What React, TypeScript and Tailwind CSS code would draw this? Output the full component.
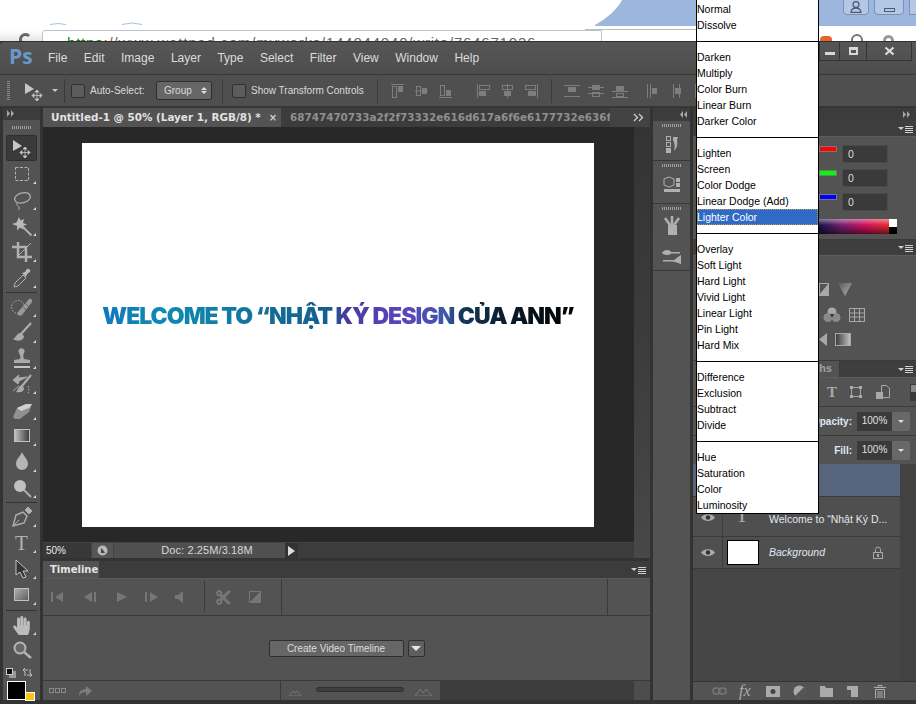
import type { ReactNode } from 'react';
import { FaHandPaper, FaCut } from 'react-icons/fa';

const G = '#b0b0b0';

function Svg({ w = 22, h = 22, children, className = '' }: { w?: number; h?: number; children: ReactNode; className?: string }) {
  return (
    <svg width={w} height={h} viewBox={`0 0 ${w} ${h}`} className={`shrink-0 ${className}`}>
      {children}
    </svg>
  );
}

const shade = (
  <defs>
    <linearGradient id="toolGrad" x1="0" x2="1" y1="0" y2="1">
      <stop offset="0" stopColor="#5c5c5c" />
      <stop offset="1" stopColor="#b0b0b0" />
    </linearGradient>
    <linearGradient id="sideGrad" x1="0" x2="1" y1="0" y2="0">
      <stop offset="0" stopColor="#3a3a3a" />
      <stop offset="1" stopColor="#c4c4c4" />
    </linearGradient>
  </defs>
);

const toolIcons: Record<string, ReactNode> = {
  move: (
    <Svg w={24} h={20}>
      <path d="M3 2v11l9-5z" fill="#c6c6c6" />
      <path d="M15 10v9M10.500 14.500h9M15 9l-2 2h4zM15 20l-2-2h4zM10 14.500l2-2v4zM20 14.500l-2-2v4z" stroke="#c6c6c6" strokeWidth=".8" fill="#c6c6c6" />
    </Svg>
  ),
  marquee: <Svg><rect x="4.500" y="4.500" width="13" height="13" fill="none" stroke={G} strokeDasharray="3 1.500" /></Svg>,
  lasso: (
    <Svg>
      <ellipse cx="11.500" cy="9" rx="8" ry="5" transform="rotate(-15 11 9)" fill="none" stroke={G} strokeWidth="1.300" />
      <path d="M6 14c-1 2 1 3 2 4s0 3-1 3" fill="none" stroke={G} />
    </Svg>
  ),
  wand: (
    <Svg>
      <path d="M8 2l1.500 3.500L13 4l-1 4 4 1.500-4 1.500.5 3.500-3.500-2-3 3 .2-4.500L1 9l4.500-1.500z" fill="#bbb" />
      <path d="M11 11l9.500 9.500" stroke={G} strokeWidth="2" />
    </Svg>
  ),
  crop: (
    <Svg>
      <path d="M7 1v15h14M1 6h14v15" fill="none" stroke={G} strokeWidth="2.500" />
      <path d="M8 14L20 2" stroke={G} />
    </Svg>
  ),
  dropper: (
    <Svg>
      <path d="M3 20l1-4 8-8 3 3-8 8z" fill="none" stroke={G} />
      <path d="M11 6l3-1 2-3c2-1 4 1 3 3l-3 2-1 3z" fill="#bbb" />
    </Svg>
  ),
  heal: (
    <Svg w={24}>
      <circle cx="8" cy="11" r="6.500" fill="none" stroke={G} strokeDasharray="1.500 1.500" />
      <path d="M8 16L19 3c2-1 4 1 3 3L12 19c-3 2-6-1-4-3z" fill="#999" />
      <path d="M12 10l4 4M15 7l4 4" stroke="#666" />
    </Svg>
  ),
  brush: (
    <Svg>
      <path d="M20 1L10 12" stroke={G} strokeWidth="2" />
      <path d="M10 11c-4-1-5 5-8 6 4 3 11 2 11-3z" fill="#aaa" />
    </Svg>
  ),
  stamp: (
    <Svg>
      <path d="M8 5a3 3 0 1 1 5 0c-1 2-1 4 0 6l6 1v3H3v-3l6-1c1-2 0-4-1-6z" fill="#aaa" />
      <path d="M3 18h16v2H3z" fill="#c4c4c4" />
    </Svg>
  ),
  history: (
    <Svg>
      <path d="M20 1L11 12" stroke={G} strokeWidth="2" />
      <path d="M11 11c-3 0-4 5-6 7 4 1 8 0 8-4z" fill="#aaa" />
      <path d="M2 6l5 4 1-3 8-4-9 1 1-3zM2 17l6-5" fill="#aaa" stroke="#aaa" />
      <path d="M17 12c1 3 1 5 0 8" stroke={G} strokeDasharray="1.500 1.500" fill="none" />
    </Svg>
  ),
  eraser: (
    <Svg w={24}>
      <path d="M3 18l4-9 9-4h6l-3 8-9 7H5z" fill="#909090" />
      <path d="M7 9l9-4h6l-3 4-8 3z" fill="#d0d0d0" />
    </Svg>
  ),
  gradient: <Svg><rect x="3.500" y="4.500" width="15" height="12" fill="url(#sideGrad)" stroke="#c0c0c0" transform="matrix(-1 0 0 1 22 0)" /></Svg>,
  drop: <Svg><path d="M11 1C9 6 5 8 5 13a6 6 0 0 0 12 0C17 8 13 6 11 1z" fill="#b5b5b5" /></Svg>,
  dodge: (
    <Svg>
      <circle cx="9" cy="9" r="6" fill="#c0c0c0" />
      <path d="M13 13l7 7" stroke={G} strokeWidth="2" />
    </Svg>
  ),
  pen: (
    <Svg w={24}>
      <path d="M3 20l3-11 7-3 4 4-3 7z" fill="none" stroke={G} strokeWidth="1.400" />
      <path d="M3 20l6-6M15 4l3-3 4 4-3 3z" stroke={G} fill={G} />
    </Svg>
  ),
  pathSel: <Svg><path d="M5 2v15l4-3 3 6 3-1-3-6h5z" fill="#333" stroke="#c4c4c4" /></Svg>,
  rect: <Svg><rect x="3.500" y="4.500" width="14" height="12" fill="url(#toolGrad)" stroke="#c0c0c0" transform="matrix(-1 0 0 -1 21 21)" /></Svg>,
  hand: <FaHandPaper size={19} color="#bcbcbc" />,
  zoom: (
    <Svg>
      <circle cx="9" cy="8" r="5.500" fill="#666" stroke="#b5b5b5" strokeWidth="2" />
      <path d="M13 12l7 6" stroke={G} strokeWidth="2.500" />
    </Svg>
  ),
};

function Tool({ name, selected = false, corner = true }: { name: string; selected?: boolean; corner?: boolean }) {
  return (
    <div className={`relative mx-[3px] h-[26px] flex items-center justify-center rounded-[2px] ${selected ? 'bg-[#3a3a3a] border border-[#2e2e2e]' : ''}`}>
      {name === 'type' ? (
        <span className="font-['Liberation_Serif',serif] text-[21px] leading-none text-[#b0b0b0]">T</span>
      ) : (
        toolIcons[name]
      )}
      {corner && <span className="absolute right-[1px] bottom-[3px] w-0 h-0 border-l-[3px] border-l-transparent border-b-[3px] border-b-[#d8d8d8]" />}
    </div>
  );
}

const ToolSep = ({ h }: { h: string }) => (
  <div className={`${h} flex items-center px-[3px]`}>
    <div className="w-full h-px bg-[#343434]" />
  </div>
);

function Grip({ w }: { w: string }) {
  return <div className={`${w} h-[3px] bg-[repeating-linear-gradient(90deg,#a0a0a0_0,#a0a0a0_1px,transparent_1px,transparent_2px)]`} />;
}

function Chevrons({ left = false }: { left?: boolean }) {
  return (
    <Svg w={8} h={7} className={left ? 'rotate-180' : ''}>
      <path d="M0 0l3 3.500L0 7zM4 0l3 3.500L4 7z" fill="#a8a8a8" />
    </Svg>
  );
}

function Toolbar() {
  return (
    <div className="w-[38px] ml-[3px] bg-[#535353] flex flex-col shrink-0 border-r border-[#333]">
      <div className="h-[12px] bg-[#3c3c3c] flex items-center pl-[4px]"><Chevrons /></div>
      <div className="h-[15px] flex items-center justify-center"><Grip w="w-[20px]" /></div>
      <Tool name="move" selected corner={false} />
      <Tool name="marquee" />
      <Tool name="lasso" />
      <Tool name="wand" />
      <Tool name="crop" />
      <Tool name="dropper" />
      <ToolSep h="h-[3px]" />
      <Tool name="heal" />
      <Tool name="brush" />
      <Tool name="stamp" />
      <Tool name="history" />
      <Tool name="eraser" />
      <Tool name="gradient" />
      <Tool name="drop" />
      <Tool name="dodge" />
      <ToolSep h="h-[3px]" />
      <Tool name="pen" />
      <Tool name="type" />
      <Tool name="pathSel" />
      <Tool name="rect" />
      <ToolSep h="h-[4px]" />
      <Tool name="hand" />
      <Tool name="zoom" corner={false} />
      <div className="h-[17px] flex items-center justify-between pl-[3px] pr-[7px]">
        <Svg w={10} h={10}>
          <rect x="3" y="3" width="7" height="7" fill="#999" />
          <rect x=".5" y=".5" width="6" height="6" fill="#111" stroke="#ccc" />
        </Svg>
        <Svg w={11} h={11}>
          <path d="M1 3h5M1 3l2-2M1 3l2 2M10 8H5M10 8L8 6M10 8l-2 2M8 2v4M3 5v4" stroke="#c0c0c0" fill="none" />
        </Svg>
      </div>
      <div className="relative h-[19px] ml-[4px]">
        <div className="w-[19px] h-[19px] bg-black border border-white" />
        <div className="absolute left-[18px] top-[11px] w-[10px] h-[9px] bg-[#fcc416] border border-white" />
      </div>
    </div>
  );
}

function Align({ kind }: { kind: number }) {
  // six groups of little align glyphs from the options bar
  const c = '#7d7d7d';
  const shapes: ReactNode[] = [
    <><path d="M1 1.500h13" stroke={c} /><rect x="2.500" y="3.500" width="4" height="11" fill="none" stroke={c} /><rect x="8" y="3" width="5" height="6" fill={c} /></>,
    <><path d="M1 8h13" stroke={c} /><rect x="2.500" y="3.500" width="4" height="9" fill="none" stroke={c} /><rect x="8" y="5" width="5" height="6" fill={c} /></>,
    <><path d="M1 14.500h13" stroke={c} /><rect x="2.500" y="2.500" width="4" height="10" fill="none" stroke={c} /><rect x="8" y="7" width="5" height="6" fill={c} /></>,
    <><path d="M1.500 1v14" stroke={c} /><rect x="3.500" y="2.500" width="10" height="4" fill="none" stroke={c} /><rect x="3" y="8" width="7" height="5" fill={c} /></>,
    <><path d="M7.500 1v14" stroke={c} /><rect x="2.500" y="2.500" width="10" height="4" fill="none" stroke={c} /><rect x="4" y="8" width="7" height="5" fill={c} /></>,
    <><path d="M13.500 1v14" stroke={c} /><rect x="1.500" y="2.500" width="10" height="4" fill="none" stroke={c} /><rect x="4" y="8" width="8" height="5" fill={c} /></>,
    <><path d="M0 2.500h16M0 13.500h16" stroke={c} /><rect x="4" y="4" width="8" height="5" fill={c} /></>,
    <><path d="M0 4.500h16M0 10.500h16" stroke={c} /><rect x="4" y="2" width="8" height="5" fill={c} /><rect x="4.500" y="9.500" width="7" height="4" fill="none" stroke={c} /></>,
    <><path d="M0 8.500h16M0 14.500h16" stroke={c} /><rect x="4" y="3" width="8" height="5" fill={c} /><rect x="4.500" y="10.500" width="7" height="3" fill="none" stroke={c} /></>,
    <><path d="M1.500 1v14M4.500 1v14" stroke={c} /><rect x="6" y="5" width="5" height="6" fill={c} /></>,
    <><path d="M3.500 1v14M9.500 1v14" stroke={c} /><rect x="5" y="5" width="6" height="6" fill={c} /></>,
    <><path d="M1.500 1v14" stroke={c} /></>,
  ];
  return <Svg w={16} h={16}>{shapes[kind]}</Svg>;
}

const Chk = () => <div className="w-[14px] h-[14px] rounded-[2px] bg-[#5c5c5c] border border-[#2f2f2f] shrink-0" />;
const VSep = () => <div className="w-px h-[24px] bg-[#3a3a3a] shrink-0" />;

function TitleBar() {
  const items: string[] = ['File', 'Edit', 'Image', 'Layer', 'Type', 'Select', 'Filter', 'View', 'Window', 'Help'];
  return (
    <div className="h-[33px] flex items-center bg-gradient-to-b from-[#565656] to-[#4d4d4d] border-t border-[#303030] rounded-tl-[4px]">
      <span className="ml-[9px] w-[39px] text-[21px] leading-none font-bold text-[#6a98cc] font-['Open_Sans',sans-serif] -mt-[3px]">Ps</span>
      <nav className="flex gap-[16.500px] text-[12px] text-[#dcdcdc] -mt-[1px]">
        {items.map((m) => <span key={m}>{m}</span>)}
      </nav>
      <div className="ml-auto self-start flex h-[19px] border-l border-b border-[#343434]">
        <div className="w-[19px] flex items-end justify-center pb-[5px]"><div className="w-[10px] h-[3px] bg-[#d8d8d8]" /></div>
        <div className="w-[27px] border-l border-[#343434] flex items-center justify-center"><div className="w-[9px] h-[8px] border-2 border-t-[3px] border-[#d8d8d8]" /></div>
        <div className="w-[46px] border-l border-r border-[#343434] flex items-center justify-center">
          <Svg w={11} h={10}><path d="M1.500 1.500l8 7M9.500 1.500l-8 7" stroke="#dcdcdc" strokeWidth="2.200" /></Svg>
        </div>
      </div>
      <div className="w-[4px]" />
    </div>
  );
}

function OptionsBar() {
  return (
    <div className="h-[33px] flex items-center bg-[#4f4f4f] border-y border-[#383838] text-[10px] text-[#dadada] shrink-0">
      <div className="ml-[7px] w-[3px] h-[19px] bg-[repeating-linear-gradient(0deg,#8a8a8a_0,#8a8a8a_1px,transparent_1px,transparent_2px)]" />
      <div className="ml-[12px]">{toolIcons.move}</div>
      <span className="ml-[6px] w-0 h-0 border-x-[3px] border-x-transparent border-t-[3px] border-t-[#c8c8c8]" />
      <div className="ml-[6px]"><VSep /></div>
      <div className="ml-[6px]"><Chk /></div>
      <span className="ml-[5px] w-[66px]">Auto-Select:</span>
      <div className="w-[56px] h-[19px] rounded-[2px] border border-[#2e2e2e] bg-[#666] flex items-center justify-between pl-[7px] pr-[4px]">
        <span>Group</span>
        <span className="flex flex-col gap-[1px]">
          <span className="w-0 h-0 border-x-[3px] border-x-transparent border-b-[3px] border-b-[#ddd]" />
          <span className="w-0 h-0 border-x-[3px] border-x-transparent border-t-[3px] border-t-[#ddd]" />
        </span>
      </div>
      <div className="ml-[10px]"><VSep /></div>
      <div className="ml-[9px]"><Chk /></div>
      <span className="ml-[5px] w-[126px] whitespace-nowrap">Show Transform Controls</span>
      <VSep />
      <div className="ml-[12px] flex items-center gap-[8px]"><Align kind={0} /><Align kind={1} /><Align kind={2} /></div>
      <div className="ml-[22px] flex items-center gap-[8px]"><Align kind={3} /><Align kind={4} /><Align kind={5} /></div>
      <div className="ml-[11px]"><VSep /></div>
      <div className="ml-[12px] flex items-center gap-[8px]"><Align kind={6} /><Align kind={7} /><Align kind={8} /></div>
      <div className="ml-[18px] flex items-center gap-[8px]"><Align kind={9} /><Align kind={10} /><Align kind={11} /></div>
    </div>
  );
}

function Canvas() {
  return (
    <div className="w-[512px] h-[384px] bg-white flex items-center justify-center pb-[37px]">
      <span className="font-['Inter',sans-serif] font-black text-[23px] tracking-[-1px] whitespace-nowrap bg-clip-text text-transparent bg-[linear-gradient(90deg,#1178c0_0%,#0f8ab0_12%,#107fa8_24%,#146c96_36%,#145f8e_48%,#4a3aa0_52%,#5c46c0_64%,#3c58a8_73%,#133a5c_76%,#0a1a2a_86%,#000_100%)]">
        WELCOME TO “NHẬT KÝ DESIGN CỦA ANN”
      </span>
    </div>
  );
}

function StatusBar() {
  return (
    <div className="h-[16px] flex text-[10px] leading-[15px] bg-[#3c3c3c] border-t border-[#444]">
      <div className="w-[48px] bg-[#383838] text-[#ececec] pl-[3px]">50%</div>
      <div className="w-[23px] bg-[#555] flex items-center justify-center border-x border-[#444]">
        <Svg w={11} h={11}>
          <circle cx="5.500" cy="5.500" r="5" fill="#b8b8b8" />
          <path d="M4 3v5h4l-2-3z" fill="#444" />
        </Svg>
      </div>
      <div className="w-[171px] bg-[#505050] text-[#d8d8d8] text-[11px] tracking-[0.1px] text-center pl-[15px]">Doc: 2.25M/3.18M</div>
      <div className="w-[13px] bg-[#333] flex items-center justify-center">
        <span className="w-0 h-0 border-y-[5px] border-y-transparent border-l-[7px] border-l-[#ddd]" />
      </div>
    </div>
  );
}

function PanelMenu() {
  return (
    <div className="flex items-center gap-[1px] shrink-0">
      <span className="w-0 h-0 border-x-[3px] border-x-transparent border-t-[3px] border-t-[#cfcfcf]" />
      <div className="w-[8px] h-[8px] bg-[repeating-linear-gradient(0deg,#d0d0d0_0,#d0d0d0_1px,transparent_1px,transparent_2px)]" />
    </div>
  );
}

function Timeline() {
  const c = '#767676';
  return (
    <div className="flex-1 flex flex-col bg-[#535353] min-h-0">
      <div className="h-[18px] bg-[#3c3c3c] flex items-center border-b border-[#5a5a5a] shrink-0">
        <div className="w-[56px] h-full bg-[#535353] text-[#e4e4e4] font-['DejaVu_Sans',sans-serif] font-bold text-[10px] leading-[17px] pl-[7px]">Timeline</div>
        <div className="ml-auto mr-[4px]"><PanelMenu /></div>
      </div>
      <div className="h-[37px] flex border-b border-[#3a3a3a] shrink-0">
        <div className="w-[161px] flex items-center pl-[8px] gap-[16px]">
          <Svg w={16} h={12}><path d="M0 1h2v10H0zM12 1v10L4 6z" fill={c} /></Svg>
          <Svg w={16} h={12}><path d="M9 1v10L1 6zM11 1h2v10h-2z" fill={c} /></Svg>
          <Svg w={14} h={12}><path d="M2 1v10l10-5z" fill={c} /></Svg>
          <Svg w={14} h={12}><path d="M0 1h2v10H0zM5 1v10l8-5z" fill={c} /></Svg>
          <Svg w={10} h={12}><path d="M0 4h3l5-4v12L3 8H0z" fill={c} /></Svg>
        </div>
        <div className="w-px h-[31px] mt-[2px] bg-[#3a3a3a]" />
        <div className="w-[76px] flex items-center pl-[10px] gap-[17px]">
          <FaCut size={17} color={c} />
          <Svg w={12} h={12}><rect x=".5" y=".5" width="11" height="11" fill="none" stroke={c} /><path d="M11 1v10H1z" fill={c} /></Svg>
        </div>
        <div className="w-px bg-[#3a3a3a]" />
        <div className="w-[325px]" />
        <div className="w-px bg-[#3a3a3a]" />
      </div>
      <div className="h-[65px] flex items-center justify-center gap-[4px] shrink-0 border-b border-[#3a3a3a] text-[10px] text-[#dcdcdc]">
        <div className="w-[135px] h-[17px] rounded-[2px] border border-[#2f2f2f] bg-[#666] text-center leading-[15px]">Create Video Timeline</div>
        <div className="w-[17px] h-[17px] rounded-[2px] border border-[#2f2f2f] bg-[#5f5f5f] flex items-center justify-center">
          <span className="w-0 h-0 border-x-[5px] border-x-transparent border-t-[5px] border-t-[#e6e6e6]" />
        </div>
      </div>
      <div className="flex-1 flex bg-[#3c3c3c]">
        <div className="w-[397px] bg-[#535353] flex items-center">
          <div className="ml-[6px] flex gap-[1px]">
            <div className="w-[5px] h-[5px] border border-[#8a8a8a]" />
            <div className="w-[5px] h-[5px] border border-[#8a8a8a]" />
            <div className="w-[5px] h-[5px] border border-[#8a8a8a]" />
          </div>
          <Svg w={15} h={12} className="ml-[12px]"><path d="M1 11c0-5 3-7 7-7V1l6 5-6 5V7c-3 0-5 1-7 4z" fill="#7c7c7c" /></Svg>
          <div className="w-px h-full ml-[187px] bg-[#3a3a3a]" />
          <Svg w={12} h={6} className="ml-[8px] mt-[4px]"><path d="M0 6l4-5 2 2 2-2 4 5z" fill="none" stroke="#777" /></Svg>
          <div className="ml-[15px] w-[88px] h-[5px] -mt-[2px] rounded-full border border-[#2f2f2f] bg-[#3e3e3e] shrink-0" />
          <Svg w={17} h={8} className="ml-[11px] mt-[2px]"><path d="M0 8l5-7 3 4 3-4 6 7z" fill="none" stroke="#777" /></Svg>
        </div>
        <div className="w-[16px] ml-auto bg-[#4d4d4d]" />
      </div>
    </div>
  );
}

function Document() {
  return (
    <div className="w-[607px] ml-[2px] flex flex-col shrink-0">
      <div className="h-[19px] flex bg-[#3c3c3c] font-['DejaVu_Sans',sans-serif] font-bold text-[10.400px] leading-[19px] shrink-0">
        <div className="w-[238px] bg-[#535353] text-[#e2e2e2] pl-[8px] whitespace-nowrap flex items-center shrink-0">
          <span>Untitled-1 @ 50% (Layer 1, RGB/8) *</span>
          <span className="ml-[8px] text-[10px] text-[#cfcfcf]">×</span>
        </div>
        <div className="flex-1 min-w-0 overflow-hidden whitespace-nowrap pl-[9px] text-[#8f8f8f]">68747470733a2f2f73332e616d617a6f6e6177732e636f6d</div>
        <div className="w-[40px] shrink-0 bg-[#434343] flex items-center pl-[23px]">
          <Svg w={12} h={9}><path d="M1 1l3.500 3.500L1 8M6 1l3.500 3.500L6 8" fill="none" stroke="#d0d0d0" strokeWidth="1.300" /></Svg>
        </div>
      </div>
      <div className="flex h-[431px] shrink-0">
        <div className="flex-1 flex flex-col min-w-0">
          <div className="h-[415px] pr-[1px] bg-[#282828] flex items-center justify-center">
            <Canvas />
          </div>
          <StatusBar />
        </div>
        <div className="w-[16px] bg-gradient-to-b from-[#343434] via-[#3c3c3c] to-[#484848] shrink-0" />
      </div>
      <div className="h-[3px] shrink-0" />
      <Timeline />
    </div>
  );
}

function DockGroup({ h, icons }: { h: string; icons: ReactNode[] }) {
  return (
    <div className={`${h} bg-[#535353] border-b border-[#383838] flex flex-col items-center pt-[3px] shrink-0`}>
      <Grip w="w-[19px]" />
      <div className="flex-1 flex flex-col items-center justify-around">{icons.map((ic, i) => <div key={i}>{ic}</div>)}</div>
    </div>
  );
}

function Dock() {
  const c = '#b0b0b0';
  return (
    <div className="w-[37px] ml-[3px] flex flex-col bg-[#535353] shrink-0">
      <div className="h-[13px] bg-[#3c3c3c] flex items-center justify-end pr-[3px]"><Chevrons left /></div>
      <DockGroup h="h-[40px]" icons={[
        <Svg w={18} h={18} key="a">
          <rect x="3.500" y="1.500" width="4" height="4" fill="none" stroke={c} />
          <rect x="3.500" y="7.500" width="4" height="4" fill="none" stroke={c} />
          <rect x="3" y="13" width="5" height="5" fill={c} />
          <path d="M10 2h5l-1 3c1 4 0 8-3 11 1-4 1-8-1-11z" fill={c} />
        </Svg>,
      ]} />
      <DockGroup h="h-[43px]" icons={[
        <Svg w={18} h={18} key="b">
          <path d="M6 1l5 2v6l-5 2-5-2V3z" fill="none" stroke={c} />
          <path d="M13 2h4v4h-4zM13 7h4v4h-4zM1 13h16v3H1z" fill={c} />
        </Svg>,
      ]} />
      <DockGroup h="h-[67px]" icons={[
        <Svg w={18} h={20} key="c">
          <path d="M5 9h9v10H5z" fill={c} />
          <path d="M7 9L2 2M9 9V0M11 9l5-7" stroke={c} strokeWidth="2.500" />
        </Svg>,
        <Svg w={20} h={18} key="d">
          <path d="M0 5h18v1.500H0zM1 13h18v1.500H1z" fill={c} />
          <ellipse cx="5" cy="5.500" rx="4" ry="2.500" fill={c} />
          <path d="M19 8v9l-9-3c3-1 5-4 9-6z" fill={c} />
        </Svg>,
      ]} />
      <div className="flex-1 bg-[#535353]" />
    </div>
  );
}

function PanelHead({ h }: { h: string }) {
  return (
    <div className={`${h} bg-[#3e3e3e] border-b border-[#5c5c5c] flex items-center justify-end pr-[3px] shrink-0`}>
      <PanelMenu />
    </div>
  );
}

function ColorRow({ color }: { color: string }) {
  return (
    <div className="h-[24px] flex items-center">
      <div className="w-[126px]" />
      <div className={`w-[18px] h-[6px] -mt-[10px] border border-[#777] ${color}`} />
      <div className="ml-[5px] w-[46px] h-[18px] bg-[#3a3a3a] border border-[#4a4a4a] text-[#dedede] text-[10.500px] leading-[17px] pl-[5px]">0</div>
    </div>
  );
}

function OpacityRow({ label }: { label: string }) {
  return (
    <div className="h-[28px] flex items-center justify-end pr-[6px] text-[10px] text-[#e0e0e0] shrink-0">
      <span className="font-bold mr-[5px] text-[#dfe8f4]">{label}</span>
      <div className="w-[35px] h-[19px] bg-[#3a3a3a] text-center leading-[18px]">100%</div>
      <div className="w-[18px] h-[19px] bg-[#686868] rounded-r-[2px] flex items-center justify-center">
        <span className="w-0 h-0 border-x-[3px] border-x-transparent border-t-[3px] border-t-[#e0e0e0]" />
      </div>
    </div>
  );
}

const Eye = () => (
  <Svg w={14} h={9}>
    <path d="M0 4.500C3 0 11 0 14 4.500 11 9 3 9 0 4.500z" fill="#ababab" />
    <circle cx="7" cy="4.500" r="2.200" fill="#333" />
  </Svg>
);

function RightPanel() {
  const c = '#a8a8a8';
  return (
    <div className="flex-1 ml-[3px] flex flex-col bg-[#535353] min-w-0">
      <div className="h-[13px] bg-[#3c3c3c] flex items-center justify-end pr-[5px] shrink-0"><Chevrons /></div>
      <PanelHead h="h-[16px]" />
      <div className="h-[103px] pt-[5px] shrink-0 border-b border-[#3a3a3a]">
        <ColorRow color="bg-[#ff0000]" />
        <ColorRow color="bg-[#00ff00]" />
        <ColorRow color="bg-[#0000ff]" />
        <div className="flex mt-[5px]">
          <div className="w-[126px]" />
          <div className="w-[70px] h-[15px] bg-[linear-gradient(180deg,#ffffff70,#ffffff00_40%,#00000090),linear-gradient(90deg,#15154a,#70206c_30%,#d01060_65%,#e83030)]" />
          <div className="w-[8px] h-[15px] flex flex-col"><div className="flex-1 bg-white" /><div className="flex-1 bg-black" /></div>
        </div>
      </div>
      <PanelHead h="h-[16px]" />
      <div className="h-[105px] shrink-0 border-b border-[#3a3a3a] pl-[126px]">
        <div className="h-[32px] mt-[17px] flex items-center gap-[8px]">
          <Svg w={10} h={13}><rect x=".5" y=".5" width="9" height="12" fill="none" stroke={c} /><path d="M0 12L9 1v11z" fill={c} /></Svg>
          <Svg w={16} h={16}><path d="M1 2h14l-7 13z" fill="url(#toolGrad)" /></Svg>
        </div>
        <div className="h-[22px] -mt-[1px] flex items-center gap-[8px]">
          <Svg w={18} h={16} className="ml-[4px]"><circle cx="9" cy="5" r="4.500" fill={c} /><circle cx="5" cy="10.500" r="4.500" fill="#8a8a8a" /><circle cx="13" cy="10.500" r="4.500" fill="#8a8a8a" /><path d="M7 7h4l-2 4z" fill="#333" /></Svg>
          <Svg w={16} h={14}><rect x=".5" y=".5" width="15" height="13" fill="none" stroke={c} /><path d="M0 5h16M0 9h16M5.500 0v14M10.500 0v14" stroke={c} /></Svg>
        </div>
        <div className="h-[26px] flex items-center gap-[8px]">
          <Svg w={8} h={13}><path d="M8 0v13L0 6.500z" fill={c} /></Svg>
          <Svg w={16} h={13}><rect x=".5" y=".5" width="15" height="12" fill="url(#sideGrad)" stroke={c} /></Svg>
        </div>
      </div>
      <div className="h-[17px] shrink-0 bg-[#3e3e3e] flex items-center pr-[3px] border-b border-[#5c5c5c]">
        <div className="w-[147px] h-full bg-[#535353] text-right pr-[7px] text-[#9a9a9a] font-['DejaVu_Sans',sans-serif] font-bold text-[10px] leading-[16px] border-r border-[#3a3a3a]">Paths</div>
        <div className="ml-auto"><PanelMenu /></div>
      </div>
      <div className="h-[28px] shrink-0 flex items-center pl-[134px] gap-[13px]">
        <span className="font-['Liberation_Serif',serif] font-bold text-[15px] leading-none text-[#a8a8a8]">T</span>
        <Svg w={12} h={12}><rect x="1.500" y="1.500" width="9" height="9" fill="none" stroke={c} /><path d="M0 0h3v3H0zM9 0h3v3H9zM0 9h3v3H0zM9 9h3v3H9z" fill={c} /></Svg>
        <Svg w={14} h={14} className="ml-[1px]"><path d="M5.500.5h5l3 3v9h-8z" fill="none" stroke={c} /><rect x="0" y="7" width="7" height="7" fill={c} /></Svg>
        <div className="ml-[7px] w-[10px] h-[17px] border border-[#3a3a3a] flex flex-col shrink-0"><div className="flex-1 bg-[#888]" /><div className="flex-1 bg-[#3a3a3a]" /></div>
      </div>
      <div className="border-y border-[#3c3c3c] shrink-0"><OpacityRow label="Opacity:" /></div>
      <OpacityRow label="Fill:" />
      <div className="flex-1 flex min-h-0">
        <div className="flex-1 flex flex-col">
          <div className="h-[33px] bg-[#56657b] border-b border-[#3a3a3a] shrink-0" />
          <div className="h-[40px] flex bg-[#4f4f4f] border-b border-[#3a3a3a] shrink-0">
            <div className="w-[30px] border-r border-[#3e3e3e] flex items-start justify-center pt-[16px]"><Eye /></div>
            <div className="w-[38px] flex justify-center"><span className="font-['Liberation_Serif',serif] text-[22px] leading-none text-[#aaa] mt-[7px]">T</span></div>
            <span className="ml-[8px] text-[10.500px] text-[#e2e8f0] leading-[44px] whitespace-nowrap">Welcome to “Nhật Ký D...</span>
          </div>
          <div className="h-[32px] flex items-center bg-[#4f4f4f] border-b border-[#3a3a3a] shrink-0">
            <div className="w-[30px] h-full border-r border-[#3e3e3e] flex items-center justify-center"><Eye /></div>
            <div className="ml-[4px] w-[32px] h-[25px] bg-white border border-black" />
            <span className="ml-[10px] text-[10.500px] italic text-[#e2e8f0]">Background</span>
            <Svg w={10} h={13} className="ml-auto mr-[17px]"><path d="M2.500 6V3.500a2.500 2.500 0 0 1 5 0V6" fill="none" stroke={c} /><rect x=".5" y="6.500" width="9" height="6" fill="none" stroke={c} /><rect x="4" y="8" width="2" height="3" fill={c} /></Svg>
          </div>
          <div className="flex-1 bg-[#464646]" />
        </div>
        <div className="w-[16px] bg-[#424242] shrink-0" />
      </div>
      <div className="h-[19px] shrink-0 border-t border-[#333] flex items-center pl-[19px] gap-[12px]">
        <Svg w={15} h={8}><rect x="1" y="1" width="7" height="6" rx="3" fill="none" stroke="#777" strokeWidth="1.500" /><rect x="7" y="1" width="7" height="6" rx="3" fill="none" stroke="#777" strokeWidth="1.500" /></Svg>
        <span className="font-['Liberation_Serif',serif] italic text-[16px] leading-none text-[#aaa] w-[15px]">fx</span>
        <Svg w={14} h={11}><rect width="14" height="11" fill="#aaa" /><circle cx="7" cy="5.500" r="2.500" fill="#444" /></Svg>
        <Svg w={13} h={13} className="ml-[1px]"><circle cx="6.500" cy="6.500" r="6" fill="#aaa" /><path d="M11 2L2 11a6 6 0 0 0 9-9z" fill="#555" /></Svg>
        <Svg w={13} h={11} className="ml-[2px]"><path d="M0 0h5l1 2h7v9H0z" fill="#aaa" /></Svg>
        <Svg w={11} h={11} className="ml-[2px]"><path d="M0 0h11v11H4V4H0z" fill="#aaa" /></Svg>
        <Svg w={12} h={13} className="ml-[4px]"><path d="M0 2.500h12M4 2V.5h4V2M1.500 4.500h9V13h-9zM4 6v6M6 6v6M8 6v6" fill="none" stroke="#aaa" /></Svg>
      </div>
    </div>
  );
}

function BrowserChrome() {
  return (
    <div className="relative h-[41px] shrink-0 overflow-hidden bg-white">
      <svg width="916" height="41" className="absolute left-0 top-0">
        <defs>
          <linearGradient id="fade" x1="0" x2="0" y1="0" y2="1"><stop offset="0" stopColor="#fff" /><stop offset="1" stopColor="#e6e6e6" /></linearGradient>
        </defs>
        <rect x="0" y="30" width="42" height="11" fill="url(#fade)" />
        <path d="M595 25C608 18 618 8 622 0H916V26H595z" fill="#9db6de" />
        <path d="M585 29.500H696" stroke="#bbb" />
        <path d="M50 24.500q8-2 16 0M122 24.500q10-3 20 0" stroke="#a9bfdf" fill="none" />
      </svg>
      <div className="relative h-full pl-[42px] pt-[30px] flex">
        <div className="h-[20px] w-[560px] border border-[#b8c4d4] rounded-tl-[3px] pl-[24px] pt-[3px] text-[15px] tracking-[0.8px] leading-[17px] whitespace-nowrap text-[#666]">
          <span className="text-[#0a8a0a]">https</span>://www.wattpad.com/myworks/144044040/write/764671036
        </div>
      </div>
      <div className="absolute left-[19px] top-[33px] w-[13px] h-[13px] rounded-full border-[3px] border-[#666] border-r-transparent" />
      <div className="absolute top-0 left-[843px] flex gap-[5px]">
        <div className="w-[26px] h-[16px] -mt-[1px] bg-[#b4c8e6] border border-[#7a90b4] rounded-b-[4px] flex items-center justify-center">
          <Svg w={12} h={12}><circle cx="6" cy="3.500" r="3" fill="none" stroke="#4a5a74" strokeWidth="1.300" /><path d="M1 11.500c0-6 10-6 10 0z" fill="none" stroke="#4a5a74" strokeWidth="1.300" /></Svg>
        </div>
        <div className="w-[30px] h-[16px] -mt-[1px] bg-[#b4c8e6] border border-[#7a90b4] rounded-b-[4px] flex items-end justify-center pb-[2px]"><div className="w-[11px] h-[4px] border border-[#4a5a74]" /></div>
        <div className="w-[16px] h-[16px] -mt-[1px] bg-[#b4c8e6] border border-[#7a90b4]" />
      </div>
      <div className="absolute left-[820px] top-[36px] w-[12px] h-[8px] bg-[#e8622c] rounded-t-[4px]" />
      <div className="absolute left-[851px] top-[34px] w-[12px] h-[12px] rounded-full border-2 border-[#777]" />
      <div className="absolute left-[883px] top-[35px] w-[11px] h-[11px] rounded-full border-[3px] border-[#999]" />
    </div>
  );
}

const blendGroups: string[][] = [
  ['Normal', 'Dissolve'],
  ['Darken', 'Multiply', 'Color Burn', 'Linear Burn', 'Darker Color'],
  ['Lighten', 'Screen', 'Color Dodge', 'Linear Dodge (Add)', 'Lighter Color'],
  ['Overlay', 'Soft Light', 'Hard Light', 'Vivid Light', 'Linear Light', 'Pin Light', 'Hard Mix'],
  ['Difference', 'Exclusion', 'Subtract', 'Divide'],
  ['Hue', 'Saturation', 'Color', 'Luminosity'],
];

function BlendMenu() {
  return (
    <div className="absolute left-[696px] top-0 w-[123px] bg-white border-x border-b border-black text-black text-[10.500px]">
      {blendGroups.map((group, i) => (
        <div key={group[0]} className={i === blendGroups.length - 1 ? 'pt-[7px]' : i === 0 ? 'pt-px pb-[8px] border-b border-black' : 'pt-[7px] pb-[8px] border-b border-black'}>
          {group.map((item) => (
            <div
              key={item}
              className={`h-[16px] leading-[16px] whitespace-nowrap ${item === 'Lighter Color' ? 'bg-[#316ac5] text-white outline-1 outline-dotted -outline-offset-1 outline-[#c09a50]' : ''}`}
            >
              {item}
            </div>
          ))}
        </div>
      ))}
    </div>
  );
}

export default function App() {
  return (
    <div className="relative w-[916px] h-[704px] overflow-hidden bg-white flex flex-col font-['Liberation_Sans',sans-serif]">
      <svg width="0" height="0" className="absolute">{shade}</svg>
      <BrowserChrome />
      <div className="flex-1 flex flex-col bg-[#333] min-h-0">
        <TitleBar />
        <OptionsBar />
        <div className="flex-1 flex pt-[1px] pb-[4px] min-h-0">
          <Toolbar />
          <Document />
          <Dock />
          <RightPanel />
        </div>
      </div>
      <BlendMenu />
    </div>
  );
}
